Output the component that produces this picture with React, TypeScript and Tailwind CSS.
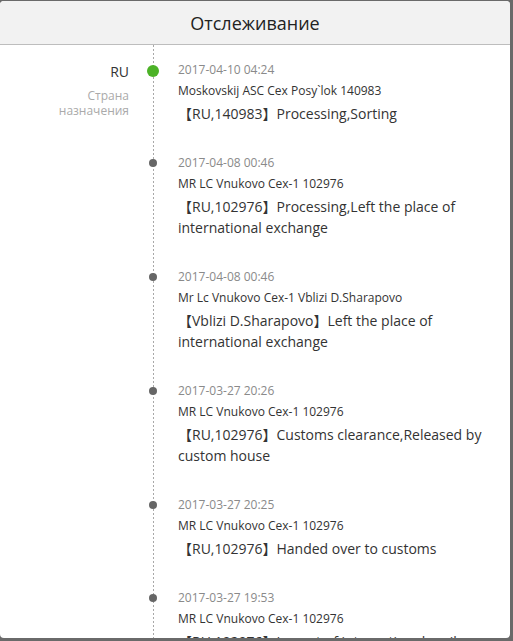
import React from 'react';

interface TrackEvent {
    time: string;
    place: string;
    status: string;
}

const events: TrackEvent[] = [
    { time: '2017-04-10 04:24', place: 'Moskovskij ASC Cex Posy`lok 140983', status: '【RU,140983】Processing,Sorting' },
    { time: '2017-04-08 00:46', place: 'MR LC Vnukovo Cex-1 102976', status: '【RU,102976】Processing,Left the place of international exchange' },
    { time: '2017-04-08 00:46', place: 'Mr Lc Vnukovo Cex-1 Vblizi D.Sharapovo', status: '【Vblizi D.Sharapovo】Left the place of international exchange' },
    { time: '2017-03-27 20:26', place: 'MR LC Vnukovo Cex-1 102976', status: '【RU,102976】Customs clearance,Released by custom house' },
    { time: '2017-03-27 20:25', place: 'MR LC Vnukovo Cex-1 102976', status: '【RU,102976】Handed over to customs' },
    { time: '2017-03-27 19:53', place: 'MR LC Vnukovo Cex-1 102976', status: '【RU,102976】Import of international mail' },
];

const App: React.FC = () => {
    return (
        <div className="w-[513px] h-[641px] bg-[#6a6a6a] pt-[1px] overflow-hidden font-['Open_Sans','Noto_Sans_CJK_SC',sans-serif]">
            <div className="w-[510px] h-[637px] bg-white rounded-[4px] overflow-hidden flex flex-col">
                <div className="h-[44px] flex-shrink-0 bg-[#f2f2f2] border-b border-[#bdbdbd] flex items-center justify-center">
                    <h1 className="text-[18px] text-[#222] leading-none">Отслеживание</h1>
                </div>
                <div className="flex flex-1">
                    <div className="w-[153px] pr-[24px] pt-[15px] text-right">
                        <p className="text-[14px] leading-[24px] text-[#333]">RU</p>
                        <p className="mt-[4px] text-[12px] leading-[15px] text-[#aaa]">
                            Страна
                            <br />
                            назначения
                        </p>
                    </div>
                    <div className="relative flex-1 pl-[25px] pr-[20px] pt-[15px]">
                        <div className="absolute left-0 top-0 bottom-0 w-px bg-[linear-gradient(#a8a8a8_50%,transparent_50%)] bg-[length:1px_4px]" />
                        {events.map((ev, i) => (
                            <div key={i} className="relative mb-[29px]">
                                {i === 0 ? (
                                    <span className="absolute -left-[31px] top-[5px] w-[12px] h-[12px] rounded-full bg-[#4cb227]" />
                                ) : (
                                    <span className="absolute -left-[29px] top-[6px] w-[8px] h-[8px] rounded-full bg-[#666]" />
                                )}
                                <p className="text-[12px] leading-[20px] text-[#8a8a8a]">{ev.time}</p>
                                <p className="text-[12px] leading-[22px] text-[#333]">{ev.place}</p>
                                <p className="mt-[1px] text-[14px] leading-[21px] text-[#333]">{ev.status}</p>
                            </div>
                        ))}
                    </div>
                </div>
            </div>
        </div>
    );
};

export default App;
